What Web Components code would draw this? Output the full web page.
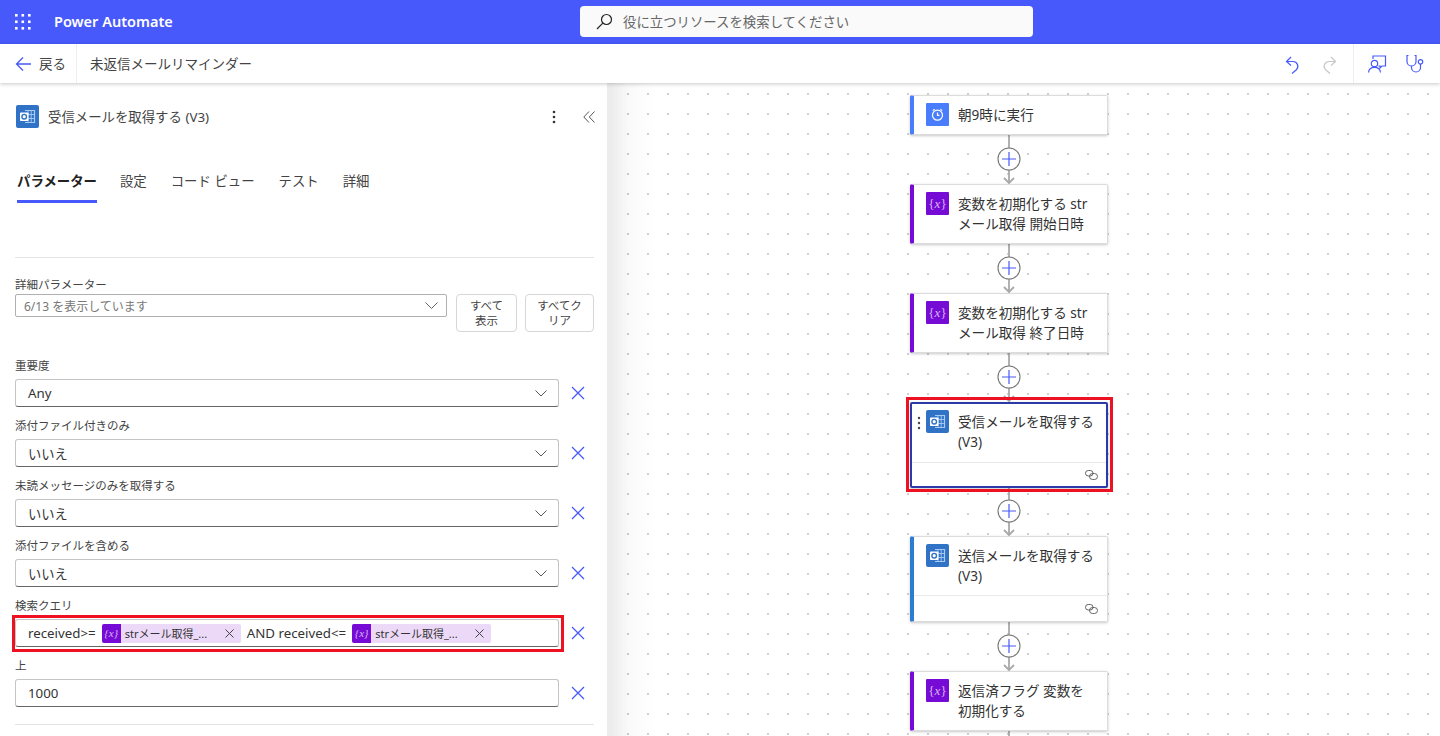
<!DOCTYPE html>
<html lang="ja">
<head>
<meta charset="utf-8">
<title>Power Automate</title>
<style>
html,body{
    margin:0;
    height:736px;
    overflow:hidden;
    background:#fff;
    font-family:"Noto Sans","Noto Sans CJK JP",sans-serif;
    color:#333;
}
pa-main{
    display:flex;
    height:653px;
}
</style>
</head>
<body>
<pa-header></pa-header>
<pa-toolbar></pa-toolbar>
<pa-main>
    <pa-panel></pa-panel>
    <pa-canvas>
        <pa-card kind="clock" first>朝9時に実行</pa-card>
        <pa-edge></pa-edge>
        <pa-card kind="var">変数を初期化する str<br>メール取得 開始日時</pa-card>
        <pa-edge></pa-edge>
        <pa-card kind="var">変数を初期化する str<br>メール取得 終了日時</pa-card>
        <pa-edge></pa-edge>
        <pa-card kind="mail" selected footer>受信メールを取得する<br>(V3)</pa-card>
        <pa-edge></pa-edge>
        <pa-card kind="mail" footer>送信メールを取得する<br>(V3)</pa-card>
        <pa-edge></pa-edge>
        <pa-card kind="var">返信済フラグ 変数を<br>初期化する</pa-card>
        <pa-edge></pa-edge>
    </pa-canvas>
</pa-main>

<script>
const FONT = `"Noto Sans","Noto Sans CJK JP",sans-serif`;

const outlookIcon = `<svg viewBox="0 0 23 23" width="100%" height="100%" style="display:block">
    <rect width="23" height="23" rx="2" fill="#2f72c6"/>
    <path d="M9 5.5h9.5v12H9" fill="none" stroke="#a9cbf0" stroke-width="1.2"/>
    <path d="M12 5.5v12M15.2 5.5v12M9 9.5h9.5M9 13.5h9.5" stroke="#a9cbf0" stroke-width=".9"/>
    <rect x="4" y="7.5" width="8.5" height="8.5" rx=".8" fill="#fff"/>
    <circle cx="8.2" cy="11.7" r="2.3" fill="none" stroke="#2f72c6" stroke-width="1.4"/>
</svg>`;

const clockIcon = `<svg viewBox="0 0 23 23" width="100%" height="100%" style="display:block">
    <rect width="23" height="23" rx="1" fill="#4a7dfb"/>
    <circle cx="11.5" cy="12.2" r="5" fill="none" stroke="#fff" stroke-width="1.2"/>
    <path d="M11.5 9.4v3h2M6.8 7.6l1.8-1.5M16.2 7.6l-1.8-1.5" fill="none" stroke="#fff" stroke-width="1.2"/>
</svg>`;

// Outer shell of the app: blue bar with the search box
class PaHeader extends HTMLElement {
    constructor(){
        super();
        this.attachShadow({mode:'open'});
        this.shadowRoot.innerHTML = `<style>
:host{
    display:block;
    height:44px;
    background:#4759fb;
    color:#fff;
    font-family:${FONT};
}
#bar{
    display:grid;
    grid-template-columns:580px 453px 1fr;
    height:44px;
    align-items:center;
}
#left{
    display:flex;
    align-items:center;
}
#waffle{
    margin-left:15px;
    width:16px;
    height:16px;
    display:block;
}
#title{
    margin-left:23px;
    padding-bottom:2px;
    font-size:14.5px;
    font-weight:600;
}
#search{
    height:31px;
    margin-top:-1px;
    background:#fafafa;
    border-radius:4px;
    display:flex;
    align-items:center;
    color:#666;
    font-size:13.4px;
}
#search svg{
    margin-left:16px;
    margin-right:10px;
}
#search span{
    padding-bottom:2px;
}
</style>
<div id="bar">
    <div id="left">
        <svg id="waffle" viewBox="0 0 16 16" fill="#fff">
            <rect x="0" y="0" width="2.6" height="2.6"/><rect x="6.5" y="0" width="2.6" height="2.6"/><rect x="13" y="0" width="2.6" height="2.6"/>
            <rect x="0" y="6.5" width="2.6" height="2.6"/><rect x="6.5" y="6.5" width="2.6" height="2.6"/><rect x="13" y="6.5" width="2.6" height="2.6"/>
            <rect x="0" y="13" width="2.6" height="2.6"/><rect x="6.5" y="13" width="2.6" height="2.6"/><rect x="13" y="13" width="2.6" height="2.6"/>
        </svg>
        <span id="title">Power Automate</span>
    </div>
    <div id="search">
        <svg width="17" height="17" viewBox="0 0 17 17" fill="none" stroke="#222" stroke-width="1.2">
            <circle cx="10.5" cy="6.5" r="5"/><path d="M6.8 10.2 1 16"/>
        </svg>
        <span>役に立つリソースを検索してください</span>
    </div>
</div>`;
    }
}
customElements.define('pa-header',PaHeader);

// Second row: back link, flow name, and icons on the right
class PaToolbar extends HTMLElement {
    constructor(){
        super();
        this.attachShadow({mode:'open'});
        this.shadowRoot.innerHTML = `<style>
:host{
    display:flex;
    position:relative;
    z-index:3;
    height:39px;
    align-items:stretch;
    background:#fff;
    box-shadow:0 1px 4px rgba(0,0,0,.22);
    font-family:${FONT};
    font-size:13.5px;
    color:#444;
}
#back{
    display:flex;
    align-items:center;
    width:77px;
    box-sizing:border-box;
    padding-left:15px;
    border-right:1px solid #eee;
}
#back svg{margin-right:7px}
#back span{padding-bottom:2px}
#name{
    display:flex;
    align-items:center;
    padding:0 0 2px 13px;
}
#tools{
    margin-left:auto;
    display:flex;
    align-items:center;
    gap:18px;
    padding-right:15px;
}
#sep{
    width:1px;
    align-self:stretch;
    background:#eee;
    margin:0 -5px 0 -5px;
}
</style>
<div id="back">
    <svg width="17" height="16" viewBox="0 0 17 16" fill="none" stroke="#4759fb" stroke-width="1.3">
        <path d="M16 8H1.5M8 1.5 1.5 8 8 14.5"/>
    </svg>
    <span>戻る</span>
</div>
<div id="name">未返信メールリマインダー</div>
<div id="tools">
    <svg width="20" height="20" viewBox="0 0 20 20" fill="none" stroke="#4759fb" stroke-width="1.2">
        <path d="M9 3 4.500 7.500 9 11.500M4.500 7.500H11a4.800 4.800 0 0 1 3.400 8.200L10 19.500"/>
    </svg>
    <svg width="20" height="20" viewBox="0 0 20 20" fill="none" stroke="#c8c8c8" stroke-width="1.2">
        <path d="M11 3l4.500 4.500-4.500 4M15.500 7.500H9a4.800 4.800 0 0 0-3.400 8.200L10 19.500"/>
    </svg>
    <div id="sep"></div>
    <svg width="20" height="20" viewBox="0 0 20 20" fill="none" stroke="#4759fb" stroke-width="1.2">
        <path d="M6 5V2h12.500v10H15l-2 2v-2h-1.500"/>
        <circle cx="7.500" cy="9.500" r="3.200"/>
        <path d="M1.500 18.500c.3-3.400 2.800-5.200 6-5.200s5.700 1.800 6 5.200"/>
    </svg>
    <svg width="20" height="20" viewBox="0 0 20 20" fill="none" stroke="#4759fb" stroke-width="1.2">
        <path d="M3.500 1.500H2v6a4.500 4.500 0 0 0 9 0v-6H9.500"/>
        <path d="M6.500 12v1.500a4.500 4.500 0 0 0 9 0V10"/>
        <circle cx="15.500" cy="7.800" r="2.200"/>
    </svg>
</div>`;
    }
}
customElements.define('pa-toolbar',PaToolbar);

// Dropdown or text box with the blue remove cross beside it
class PaField extends HTMLElement {
    constructor(){
        super();
        this.attachShadow({mode:'open'});
        const chevron = this.hasAttribute('plain') ? '' : `<svg id="chev" width="12" height="7" viewBox="0 0 12 7" fill="none" stroke="#555" stroke-width="1"><path d="M.5.5 6 6 11.500.5"/></svg>`;
        this.shadowRoot.innerHTML = `<style>
:host{
    display:grid;
    grid-template-columns:544px 38px;
    grid-template-rows:21px 28px;
    margin-bottom:11px;
    font-family:${FONT};
}
#label{
    grid-column:1 / 3;
    font-size:11.500px;
    line-height:16px;
    color:#444;
}
#box{
    position:relative;
    display:flex;
    align-items:center;
    box-sizing:border-box;
    padding:0 12px;
    border:1px solid #c4c4c4;
    border-bottom:1px solid #666;
    border-radius:3px;
    background:#fff;
    font-size:13.300px;
    color:#333;
    white-space:nowrap;
}
#chev{
    margin-left:auto;
    margin-right:-1px;
}
:host([highlight]) #box::after{
    content:"";
    position:absolute;
    left:-4px;
    right:-6px;
    top:-5px;
    bottom:-6px;
    border:3px solid #ee1122;
    pointer-events:none;
}
#remove{
    justify-self:center;
    align-self:center;
    margin-left:0;
}
</style>
<div id="label">${this.getAttribute('label')}</div>
<div id="box"><slot></slot>${chevron}</div>
<svg id="remove" width="14" height="14" viewBox="0 0 14 14" stroke="#4759fb" stroke-width="1.300"><path d="M1 1l12 12M13 1 1 13"/></svg>`;
    }
}
customElements.define('pa-field',PaField);

class PaChip extends HTMLElement {
    constructor(){
        super();
        this.attachShadow({mode:'open'});
        this.shadowRoot.innerHTML = `<style>
:host{
    display:inline-flex;
    align-items:center;
    width:139px;
    height:19px;
    background:#ecd9f7;
    border-radius:2px;
    font-size:11px;
    color:#333;
    margin:0 6px;
}
#icon{
    width:19px;
    height:19px;
    background:#770bd6;
    color:#d9b8f5;
    font:italic 11px "Liberation Serif",serif;
    display:flex;
    align-items:center;
    justify-content:center;
    border-radius:2px 0 0 2px;
}
#text{margin-left:4px}
svg{margin-left:auto;margin-right:7px}
</style>
<div id="icon">{x}</div>
<span id="text"><slot></slot></span>
<svg width="9" height="9" viewBox="0 0 9 9" stroke="#444" stroke-width="1"><path d="M.5.5l8 8M8.500.5l-8 8"/></svg>`;
    }
}
customElements.define('pa-chip',PaChip);

// Left side panel with action parameters
class PaPanel extends HTMLElement {
    constructor(){
        super();
        this.attachShadow({mode:'open'});
        this.shadowRoot.innerHTML = `<style>
:host{
    display:block;
    position:relative;
    z-index:2;
    width:610px;
    flex:none;
    box-sizing:border-box;
    padding:22px 13px 0 15px;
    background:#fff;
    border-right:3px solid #ececec;
    font-family:${FONT};
    color:#444;
    overflow:hidden;
}
#head{
    display:flex;
    align-items:center;
    height:23px;
    padding-left:1px;
    font-size:13.400px;
}
#head .ico{
    width:23px;
    height:23px;
    margin-right:9px;
}
#head span{padding-bottom:2px}
#more{margin-left:auto;margin-right:27px}
#collapse{margin-right:-1px}
#tabs{
    display:flex;
    margin-top:42px;
    padding-left:2px;
    font-size:13.400px;
    line-height:22px;
    gap:24px;
}
#tabs div{
    height:22px;
    padding-bottom:8px;
    border-bottom:3px solid transparent;
    white-space:nowrap;
}
#tabs .on{
    font-weight:700;
    color:#222;
    border-bottom-color:#4759fb;
    margin-right:-1px;
}
.rule{
    height:1px;
    background:#e4e4e4;
}
#adv{margin:19px 0 26px}
#adv label{
    display:block;
    font-size:11.500px;
    line-height:16px;
    margin-bottom:1px;
}
#adv .row{
    display:flex;
    align-items:flex-start;
    gap:8px;
}
#drop{
    width:432px;
    height:23px;
    margin-right:1px;
    box-sizing:border-box;
    border:1px solid #b0b0b0;
    border-radius:2px;
    display:flex;
    align-items:center;
    padding:0 8px;
    font-size:12px;
    color:#777;
}
#drop svg{margin-left:auto}
.btn{
    box-sizing:border-box;
    height:38px;
    border:1px solid #d6d6d6;
    border-radius:4px;
    font-size:11.500px;
    line-height:15px;
    text-align:center;
    padding-top:3px;
    color:#444;
}
</style>
<div id="head">
    <div class="ico">${outlookIcon}</div>
    <span>受信メールを取得する (V3)</span>
    <svg id="more" width="4" height="14" viewBox="0 0 4 14" fill="#333"><circle cx="2" cy="2" r="1.300"/><circle cx="2" cy="7" r="1.300"/><circle cx="2" cy="12" r="1.300"/></svg>
    <svg id="collapse" width="12" height="12" viewBox="0 0 12 12" fill="none" stroke="#555" stroke-width="1"><path d="M6 .5.8 6 6 11.500M11.500.5 6.300 6l5.200 5.500"/></svg>
</div>
<div id="tabs">
    <div class="on">パラメーター</div>
    <div>設定</div>
    <div>コード ビュー</div>
    <div>テスト</div>
    <div>詳細</div>
</div>
<div class="rule" style="margin-top:54px"></div>
<div id="adv">
    <label>詳細パラメーター</label>
    <div class="row">
        <div id="drop">6/13 を表示しています
            <svg width="13" height="7" viewBox="0 0 13 7" fill="none" stroke="#666" stroke-width="1"><path d="M.5.5l6 6 6-6"/></svg>
        </div>
        <div class="btn" style="width:61px">すべて<br>表示</div>
        <div class="btn" style="width:69px">すべてク<br>リア</div>
    </div>
</div>
<pa-field label="重要度">Any</pa-field>
<pa-field label="添付ファイル付きのみ">いいえ</pa-field>
<pa-field label="未読メッセージのみを取得する">いいえ</pa-field>
<pa-field label="添付ファイルを含める">いいえ</pa-field>
<pa-field label="検索クエリ" plain highlight>received&gt;=<pa-chip>strメール取得_...</pa-chip>AND received&lt;=<pa-chip>strメール取得_...</pa-chip></pa-field>
<pa-field label="上" plain>1000</pa-field>
<div class="rule" style="margin-top:17px"></div>`;
    }
}
customElements.define('pa-panel',PaPanel);

// Flow designer background, dots every 20px, shaded next to the panel
class PaCanvas extends HTMLElement {
    constructor(){
        super();
        this.attachShadow({mode:'open'});
        this.shadowRoot.innerHTML = `<style>
:host{
    display:flex;
    flex:1;
    flex-direction:column;
    align-items:center;
    box-sizing:border-box;
    padding:12px 32px 0 0;
    overflow:hidden;
    background-color:#fff;
    background-image:
        linear-gradient(to right,rgba(0,0,0,.08),rgba(0,0,0,.025) 18px,transparent 44px),
        radial-gradient(circle at 1px 1px,#d0d0d0 .8px,transparent 1.100px);
    background-size:100% 100%,20px 20px;
    background-position:0 0,17px 10px;
}
</style>
<slot></slot>`;
    }
}
customElements.define('pa-canvas',PaCanvas);

class PaCard extends HTMLElement {
    constructor(){
        super();
        this.attachShadow({mode:'open'});
        const kind = this.getAttribute('kind');
        const colors = {clock:'#4a7dfb', var:'#770bd6', mail:'#2b7cd3'};
        let icon = `<div id="fx">{<i>x</i>}</div>`;
        if(kind==='clock') icon = clockIcon;
        if(kind==='mail') icon = outlookIcon;
        const footer = this.hasAttribute('footer') ? `<div id="foot">
            <svg width="13" height="10" viewBox="0 0 13 10" fill="none" stroke="#555" stroke-width=".9"><rect x=".5" y=".5" width="7.500" height="5.500" rx="2.700"/><rect x="4.500" y="3.500" width="8" height="6" rx="3"/></svg>
        </div>` : '';
        const grip = this.hasAttribute('selected') ? `<svg id="grip" width="4" height="14" viewBox="0 0 4 14" fill="#444"><circle cx="2" cy="2" r="1.200"/><circle cx="2" cy="7" r="1.200"/><circle cx="2" cy="12" r="1.200"/></svg><div id="mark"></div>` : '';
        this.shadowRoot.innerHTML = `<style>
:host{
    display:block;
    position:relative;
    width:198px;
    box-sizing:border-box;
    flex:none;
    background:#fff;
    border:1px solid #dcdcdc;
    border-left:4px solid ${colors[kind]};
    border-radius:2px;
    box-shadow:0 1px 3px rgba(0,0,0,.22);
    font-family:${FONT};
    font-size:13.600px;
    line-height:20px;
    color:#333;
}
:host([selected]){
    border:2px solid #2b3aa8;
    margin-bottom:-1px;
}
#top{
    display:flex;
    align-items:flex-start;
    padding:9px 6px 9px 12px;
    white-space:nowrap;
}
:host([selected]) #top{
    padding:8px 5px 10px 14px;
}
#ico{
    width:23px;
    height:23px;
    flex:none;
    margin:-2px 9px -1px 0;
}
#fx{
    width:23px;
    height:23px;
    background:#770bd6;
    border-radius:1px;
    color:#d9b8f5;
    font:13px/23px "Liberation Serif",serif;
    text-align:center;
}
#foot{
    height:25px;
    border-top:1px solid #eaeaea;
    display:flex;
    align-items:center;
    justify-content:flex-end;
    padding-right:9px;
}
:host([selected]) #foot{height:23px;padding-right:8px}
#grip{
    position:absolute;
    left:5px;
    top:12px;
}
#mark{
    position:absolute;
    left:-6px;
    right:-7px;
    top:-7px;
    bottom:-6px;
    border:3px solid #ee1122;
    pointer-events:none;
}
</style>
${grip}
<div id="top"><div id="ico">${icon}</div><div id="text"><slot></slot></div></div>
${footer}`;
    }
}
customElements.define('pa-card',PaCard);

// Connector between two cards: line, plus button, arrow head
class PaEdge extends HTMLElement {
    constructor(){
        super();
        this.attachShadow({mode:'open'});
        this.shadowRoot.innerHTML = `<style>
:host{
    display:block;
    flex:none;
    width:30px;
    height:49px;
}
svg{display:block}
</style>
<svg width="30" height="49" viewBox="0 0 30 49" fill="none">
    <path d="M15 0v48M10 43l5 5 5-5" stroke="#a9a9a9" stroke-width="1.800"/>
    <circle cx="15" cy="24" r="11" fill="#fff" stroke="#777" stroke-width="1.100"/>
    <path d="M15 17v14M8 24h14" stroke="#4759fb" stroke-width="1.200"/>
</svg>`;
    }
}
customElements.define('pa-edge',PaEdge);
</script>
</body>
</html>
